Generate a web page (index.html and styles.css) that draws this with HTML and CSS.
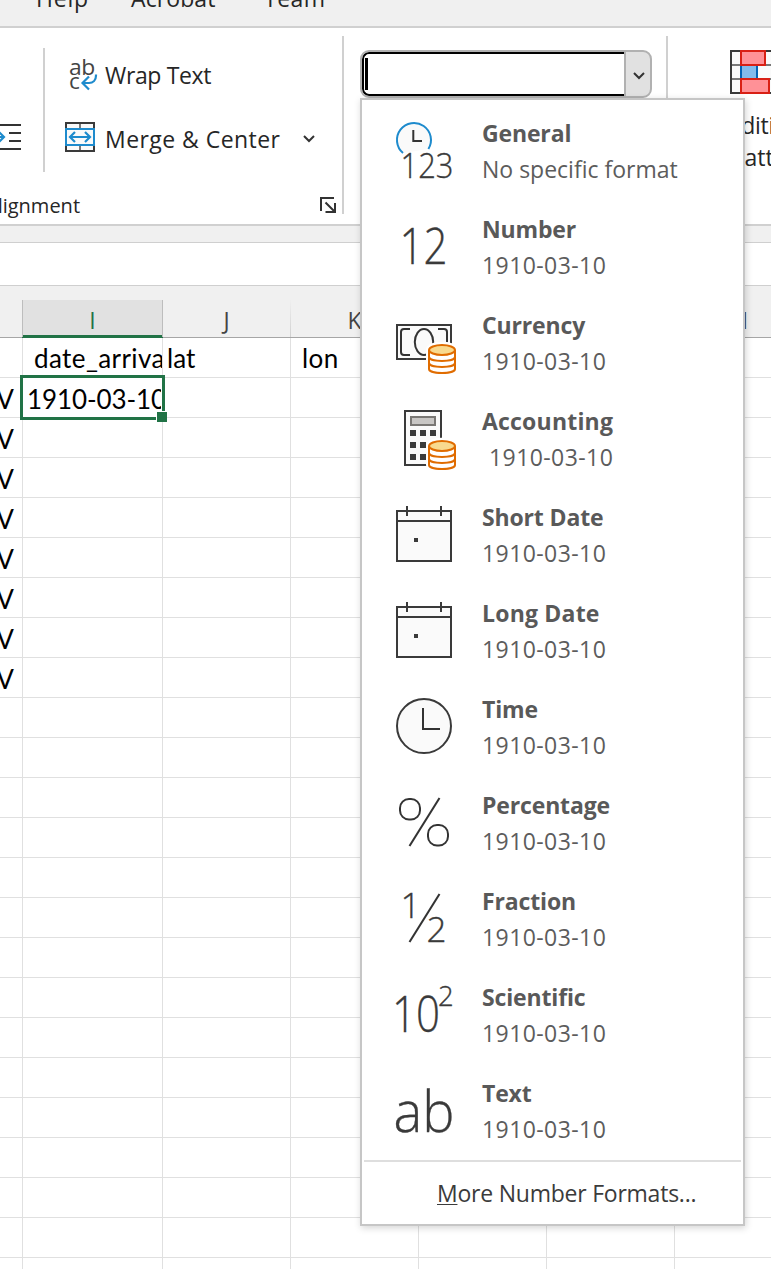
FILE: index.html
```html
<!DOCTYPE html>
<html lang="en">
<head>
<meta charset="utf-8">
<title>Number format</title>
<link rel="stylesheet" href="styles.css">
</head>
<body>
<svg class="defs" width="0" height="0" aria-hidden="true">
  <defs>
    <g id="coins">
      <path class="halo" d="M33 36C33 29 59 29 59 36V55C59 62 33 62 33 55Z"/>
      <path class="coin-body" d="M33 36V55C33 60.3 59 60.3 59 55V36"/>
      <path class="coin-line" d="M33 42.7C33 48.3 59 48.3 59 42.7M33 48.7C33 54.3 59 54.3 59 48.7"/>
      <ellipse class="coin-top" cx="46" cy="36" rx="13" ry="5"/>
    </g>
    <g id="calendar">
      <path class="shape" d="M1 5H55V55H1ZM1 15H55M11 0V10M45 0V10"/>
      <path class="solid" d="M18 32h4v4h-4z"/>
    </g>
  </defs>
</svg>
<div class="app">
  <nav class="tabs"><span class="tab help">Help</span><span class="tab acrobat">Acrobat</span><span class="tab team">Team</span></nav>
  <section class="ribbon">
    <div class="group indent-group">
      <svg class="indent-icon" width="22" height="28" viewBox="0 0 22 28"><path class="ink" d="M0 2H21M9 10H21M9 18H21M0 26H21"/><path class="blue" d="M0 14H4M-2 8L4 14L-2 20"/></svg>
    </div>
    <div class="inner-rule"></div>
    <div class="group align-group">
      <div class="command wrap">
        <svg width="32" height="34" viewBox="0 0 32 34"><text class="abc" x="4" y="16.500" font-size="22.500" textLength="26" lengthAdjust="spacingAndGlyphs">ab</text><text class="abc" x="4" y="30.500" font-size="22.500" textLength="10.500" lengthAdjust="spacingAndGlyphs">c</text><path class="blue" d="M31 16.500V17.500C31 22 28 25 24 25H17.500M24 18.500L17.500 25L24 31.500"/></svg>
        <span>Wrap Text</span>
      </div>
      <div class="command merge">
        <svg width="30" height="30" viewBox="0 0 30 30"><path class="shape" d="M1 1H29V29H1Z"/><path class="gray" d="M15 2V7M15 23V28"/><path class="blue box" d="M1 7H29V23H1Z"/><path class="blue" d="M5 15H25M10 10L5 15L10 20M20 10L25 15L20 20"/></svg>
        <span>Merge &amp; Center</span>
        <svg class="chevron" width="12" height="8" viewBox="0 0 12 8"><path class="ink" d="M1 1L6 6L11 1"/></svg>
      </div>
      <div class="group-name"><span>Alignment</span><svg width="18" height="18" viewBox="0 0 18 18"><path class="ink" d="M2 15V2H15M6.500 6.500L15 15M16 7V16H6.500"/></svg></div>
    </div>
    <div class="group-rule"></div>
    <div class="group number-group">
      <div class="combo"><div class="field"><i class="caret"></i></div><div class="drop"><svg width="12" height="8" viewBox="0 0 12 8"><path class="ink" d="M1 1L6 6L11 1"/></svg></div></div>
    </div>
    <div class="group-rule"></div>
    <div class="group styles-group">
      <svg width="64" height="44" viewBox="0 0 64 44"><path class="shape" d="M1 1H63V43H1Z"/><path class="gray" d="M2 15H62M2 29H62"/><path class="blue-bar" d="M10 16H28V28H10Z"/><path class="blue-edge" d="M11 16V28M27 16V28"/><path class="red-bar" d="M11 1H35V15H11ZM11 29H39V43H11Z"/></svg>
      <span class="label tight">Conditional</span>
      <span class="label loose">Formatting <svg width="12" height="8" viewBox="0 0 12 8"><path class="ink" d="M1 1L6 6L11 1"/></svg></span>
    </div>
  </section>
  <div class="gap-bar"></div>
  <div class="formula-bar"></div>
  <div class="col-heads"><span></span><span class="active">I</span><span>J</span><span>K</span><span>L</span><span>M</span><span class="last">N</span></div>
  <main class="sheet" id="sheet"></main>

  <aside class="menu">
    <div class="item"><svg viewBox="0 0 60 60"><path class="shape none" d="M7 31A17 17 0 1 1 32.400 27Z"/><path class="blue thin" d="M7 31A17 17 0 1 1 32.400 27"/><path class="ink" d="M17.300 8V19H26"/><text x="4.500" y="55.800" font-size="35.500" textLength="53" lengthAdjust="spacingAndGlyphs">123</text></svg><p><b>General</b><span>No specific format</span></p></div>
    <div class="item"><svg viewBox="0 0 60 60"><text x="3.500" y="46" font-size="50" textLength="48" lengthAdjust="spacingAndGlyphs">12</text></svg><p><b>Number</b><span class="date">1910-03-10</span></p></div>
    <div class="item"><svg viewBox="0 0 60 60"><path class="shape" d="M1 11H55V45H1Z"/><path class="ink" d="M14 15H8Q5 15 5 18V38Q5 41 8 41H14M42 15H48Q51 15 51 18V38"/><ellipse class="ink" cx="28" cy="28" rx="9.200" ry="13"/><use href="#coins"/></svg><p><b>Currency</b><span class="date">1910-03-10</span></p></div>
    <div class="item"><svg viewBox="0 0 60 60"><path class="shape" d="M9 1H45V55H9Z"/><path class="display" d="M15 7H39V15H15Z"/><path class="solid" d="M14 20h6v6h-6zM24 20h6v6h-6zM34 20h6v6h-6zM14 32h6v6h-6zM24 32h6v6h-6zM14 44h6v6h-6zM24 44h6v6h-6z"/><use href="#coins"/></svg><p><b class="wide">Accounting</b><span class="date shifted">1910-03-10</span></p></div>
    <div class="item"><svg viewBox="0 0 60 60"><use href="#calendar"/></svg><p><b>Short Date</b><span class="date">1910-03-10</span></p></div>
    <div class="item"><svg viewBox="0 0 60 60"><use href="#calendar"/></svg><p><b class="wide">Long Date</b><span class="date">1910-03-10</span></p></div>
    <div class="item"><svg viewBox="0 0 60 60"><circle class="shape" cx="28" cy="28" r="27"/><path class="ink" d="M27 10V31H44"/></svg><p><b>Time</b><span class="date">1910-03-10</span></p></div>
    <div class="item"><svg viewBox="0 0 60 60"><rect class="ink" x="4" y="5" width="20" height="20.500" rx="9"/><rect class="ink" x="32" y="31" width="20" height="20.500" rx="9"/><path class="ink" d="M13.500 52L43.500 4"/></svg><p><b>Percentage</b><span class="date">1910-03-10</span></p></div>
    <div class="item"><svg viewBox="0 0 60 60"><text x="4.500" y="28" font-size="35">1</text><path class="ink" d="M13.500 52L43.500 4"/><text x="30.500" y="52" font-size="35">2</text></svg><p><b>Fraction</b><span class="date">1910-03-10</span></p></div>
    <div class="item"><svg viewBox="0 0 60 60"><text x="-4" y="46" font-size="50" textLength="48" lengthAdjust="spacingAndGlyphs">10</text><text x="42" y="20" font-size="27.500">2</text></svg><p><b>Scientific</b><span class="date">1910-03-10</span></p></div>
    <div class="item"><svg viewBox="0 0 60 60"><text x="-2.500" y="50" font-size="57" textLength="61" lengthAdjust="spacingAndGlyphs">ab</text></svg><p><b>Text</b><span class="date">1910-03-10</span></p></div>
    <div class="more"><span><u>M</u>ore Number Formats...</span></div>
  </aside>
</div>
<script src="sheet.js"></script>
</body>
</html>
```

FILE: styles.css
```css
* { box-sizing: border-box; }
body { margin: 0; background: #fff; font-family: "Open Sans", "Noto Sans", sans-serif; color: #262626; }
.defs { display: block; position: absolute; }
.app { position: relative; width: 771px; height: 1269px; overflow: hidden; display: flex; flex-direction: column; font-size: 23px; }
svg { display: block; flex: none; overflow: visible; }

.tabs { height: 28px; flex: none; background: #f0f0f0; border-bottom: 2px solid #d0d0d0; display: flex; padding-left: 36px; overflow: hidden; }
.tab { line-height: 32px; height: 32px; margin-top: -18px; white-space: nowrap; }
.help { width: 95px; letter-spacing: 0.8px; }
.acrobat { width: 133px; letter-spacing: 0.1px; }
.team { letter-spacing: 0.5px; }

.ribbon { height: 198px; flex: none; background: #fff; border-bottom: 2px solid #d0d0d0; display: flex; }
.group { flex: none; }
.indent-group { width: 43px; padding-top: 95px; }
.inner-rule { width: 2px; height: 124px; margin-top: 20px; background: #d0d0d0; flex: none; }
.group-rule { width: 2px; height: 178px; margin-top: 8px; background: #d0d0d0; flex: none; }
.align-group { width: 297px; padding: 30px 0 0 20px; }
.command { display: flex; align-items: center; white-space: nowrap; }
.wrap { height: 34px; gap: 8px; letter-spacing: -0.35px; }
.merge { height: 30px; margin-top: 30px; gap: 10px; letter-spacing: 0.45px; }
.merge span { padding-top: 4px; }
.merge .chevron { margin: 4px 0 0 13px; }
.group-name { display: flex; justify-content: space-between; align-items: center; margin: 38px 5px 0 -80px; height: 30px; font-size: 20px; }
.number-group { width: 322px; padding: 22px 0 0 16px; }
.combo { width: 292px; height: 48px; display: flex; border: 2px solid #b1b1b1; border-radius: 9px; overflow: hidden; background: #e1e1e1; }
.field { flex: 1; background: #fff; border: 2px solid #000; border-right: 0; border-radius: 7px 0 0 7px; padding: 4px 1px; }
.caret { display: block; width: 3px; height: 32px; background: #000; }
.drop { width: 26px; border-left: 2px solid #b1b1b1; display: flex; align-items: center; justify-content: center; padding: 4px 0 0 2px; }
.styles-group { width: 188px; padding-top: 22px; display: flex; flex-direction: column; align-items: center; }
.styles-group .label { height: 32px; line-height: 32px; display: flex; gap: 16px; align-items: center; white-space: nowrap; }
.styles-group .tight { letter-spacing: -0.3px; margin-right: 5px; }
.styles-group .loose { margin-right: 2px; }
.styles-group > svg { margin-bottom: 15px; }

.gap-bar { height: 17px; flex: none; background: #f0f0f0; border-bottom: 1px solid #cfcfcf; }
.formula-bar { height: 43px; flex: none; border-bottom: 1px solid #cfcfcf; }
.col-heads { height: 52px; flex: none; padding-top: 14px; background: #f0f0f0; border-bottom: 1px solid #a6a6a6; display: grid; grid-template-columns: 22px 141px 128px 128px 128px 128px 128px; grid-template-rows: 37px; }
.col-heads span { text-align: center; line-height: 40px; height: 37px; font-size: 23px; color: #444; border-right: 1px solid; border-image: linear-gradient(#f0f0f0, #cfcfcf) 1; }
.col-heads span:first-child { border: 0; }
.col-heads .last { padding-left: 2px; }
.col-heads .active { background: #e1e1e1; color: #217346; border-image: none; border: 0 solid #bdbdbd; border-width: 0 1px; box-shadow: inset 0 -2px #217346, 0 1px #217346; }

.sheet { flex: 1; overflow: hidden; font-family: Lato, sans-serif; font-size: 26px; letter-spacing: 0.1px; color: #000; }
.row { height: 40px; display: grid; grid-template-columns: 23px 140px 128px 128px 128px 128px 128px; }
.row:first-child .cell { line-height: 41px; }
.cell { border-right: 1px solid #e0e0e0; border-bottom: 1px solid #e0e0e0; line-height: 42px; height: 40px; white-space: pre; overflow: hidden; padding-left: 4px; }
.cell.end { padding: 0 8px 0 0; display: flex; justify-content: flex-end; }
.cell.spaced { padding-left: 11px; letter-spacing: 0.4px; }
.cell.selected { position: relative; overflow: visible; }
.cell.selected::before { content: ""; position: absolute; inset: -3px; border: 3px solid #217346; }
.cell.selected::after { content: ""; position: absolute; right: -5px; bottom: -5px; width: 10px; height: 10px; background: #217346; border: 1px solid #fff; border-right: 0; border-bottom: 0; }
.clip { display: block; overflow: hidden; height: 36px; width: 134px; letter-spacing: -0.1px; }

.menu { position: absolute; left: 360px; top: 98px; width: 385px; height: 1128px; background: #fff; border: 2px solid #c6c6c6; box-shadow: 1px 2px 7px rgba(0, 0, 0, .17); padding: 4px 2px 0; }
.item { height: 96px; display: flex; padding: 11px 0 0 32px; }
.item svg { width: 60px; height: 60px; margin-top: 7px; }
.item p { margin: 0 0 0 26px; color: #5c5c5c; white-space: nowrap; }
.item b, .item p span { display: block; line-height: 36px; height: 36px; }
.item b { color: #595959; font-size: 23px; letter-spacing: -0.15px; }
.item b.wide { letter-spacing: 0.2px; }
.item .date { letter-spacing: 0.42px; }
.item .shifted { padding-left: 7px; }
.more { height: 64px; border-top: 2px solid #dedede; padding: 13px 0 0 73px; line-height: 36px; color: #3b3b3b; letter-spacing: -0.23px; }
.more u { text-decoration-thickness: 1px; text-underline-offset: 2px; }

text { font-family: "Open Sans", "Noto Sans", sans-serif; font-weight: 300; fill: #3a3a3a; stroke: #3a3a3a; stroke-width: 0.35; }
text.abc { font-weight: 400; fill: #444; stroke: none; }
.ink { fill: none; stroke: #333; stroke-width: 2; }
.shape { fill: #fafafa; stroke: #3a3a3a; stroke-width: 2; }
.shape.none { stroke: none; }
.solid { fill: #3a3a3a; }
.gray { fill: none; stroke: #797979; stroke-width: 2; }
.blue { fill: none; stroke: #1e8bcd; stroke-width: 2.200; }
.blue.thin { stroke-width: 2; }
.blue.box { fill: #fafafa; stroke-width: 2; }
.display { fill: #c8c6c4; stroke: #797774; stroke-width: 2; }
.halo { fill: #fff; stroke: #fff; stroke-width: 6; }
.coin-body { fill: #fff; stroke: #e06c00; stroke-width: 2; }
.coin-line { fill: none; stroke: #e06c00; stroke-width: 2; }
.coin-top { fill: #f8da8f; stroke: #e06c00; stroke-width: 2; }
.red-bar { fill: #ff9197; stroke: #d92015; stroke-width: 2; }
.blue-bar { fill: #83bbec; }
.blue-edge { stroke: #0563b5; stroke-width: 2; }
```

FILE: sheet.js
```js
const rows = [["", "date_arrival", "lat", "lon"], ["V", "1910-03-10"]];
for (let i = 0; i < 7; i++) rows.push(["V"]);
const sheet = document.getElementById("sheet");

for (let r = 0; r < 24; r++) {
  const row = document.createElement("div");
  row.className = "row";
  for (let c = 0; c < 7; c++) {
    const cell = document.createElement("div");
    const value = (rows[r] || [])[c] || "";
    cell.className = "cell";
    if (c === 0) cell.classList.add("end");
    if (r === 0 && (c === 1 || c === 3)) cell.classList.add("spaced");
    if (r === 1 && c === 1) {
      cell.classList.add("selected");
      const clip = document.createElement("span");
      clip.className = "clip";
      clip.textContent = value;
      cell.append(clip);
    } else {
      cell.textContent = value;
    }
    row.append(cell);
  }
  sheet.append(row);
}
```
